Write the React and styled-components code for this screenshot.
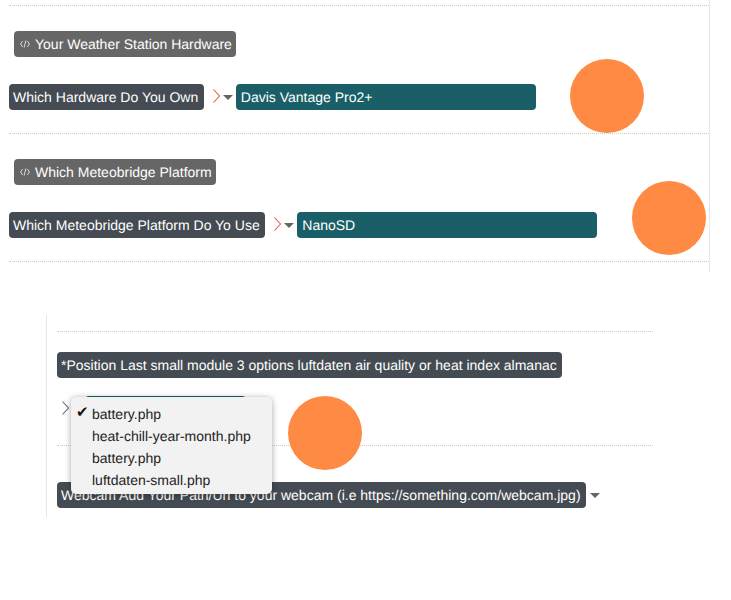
import React from 'react';
import styled, { createGlobalStyle } from 'styled-components';

const GlobalStyle = createGlobalStyle`
  html, body {
    margin: 0;
    padding: 0;
    background: #fff;
    font-family: "Liberation Sans", Arial, sans-serif;
    font-size: 14px;
    text-rendering: geometricPrecision;
  }
`;

const TopPanel = styled.div`
  width: 710px;
  height: 272px;
  padding-top: 5px;
  box-sizing: border-box;
  border-right: 1px solid #e6e6ee;
`;

const BottomPanel = styled.div`
  width: 596px;
  margin: 43px 0 0 46px;
  padding: 16px 0 9px 10px;
  border-left: 1px solid #e6e6ee;
`;

const Rule = styled.div`
  border-top: 1px dotted #ccc;
  margin-left: ${(p) => p.$inset || 0}px;
  margin-top: ${(p) => p.$top || 0}px;
`;

const Section = styled.div`
  padding: 25px 0 23px 9px;
`;

const Heading = styled.div`
  display: inline-flex;
  align-items: center;
  gap: 5px;
  height: 26px;
  margin-left: 5px;
  padding: 0 4px 0 6px;
  border-radius: 4px;
  background: #666;
  color: #fff;
  vertical-align: top;
`;

const Row = styled.div`
  position: relative;
  display: flex;
  align-items: center;
  height: 26px;
  margin-top: ${(p) => p.$top || 0}px;
`;

const Label = styled.div`
  height: 26px;
  line-height: 26px;
  padding: 0 5.6px 0 4px;
  border-radius: 4px;
  background: #444b52;
  color: #fff;
  white-space: nowrap;
`;

const Value = styled.div`
  box-sizing: border-box;
  width: ${(p) => p.$width}px;
  height: 26px;
  line-height: 26px;
  padding: 0 5px;
  border-radius: 4px;
  background: #1a5f68;
  color: #fff;
`;

const Arrow = styled.svg`
  flex: none;
  width: 7px;
  height: 14px;
  margin: -3px 3px 0 ${(p) => p.$left}px;
  fill: none;
  stroke: ${(p) => p.$color};
  stroke-width: 1.1;
`;

const Caret = styled.span`
  flex: none;
  width: 0;
  height: 0;
  margin: 1px 3px 0 ${(p) => p.$left || 0}px;
  border-left: 5px solid transparent;
  border-right: 5px solid transparent;
  border-top: 5px solid #666;
`;

const Circle = styled.div`
  position: absolute;
  z-index: 1;
  left: ${(p) => p.$left}px;
  top: ${(p) => p.$top}px;
  width: 74px;
  height: 74px;
  border-radius: 50%;
  background: #ff8a43;
`;

const Menu = styled.div`
  position: absolute;
  z-index: 2;
  left: 14px;
  top: 1px;
  width: 201px;
  height: 97px;
  box-sizing: border-box;
  padding-top: 6px;
  border-radius: 5px;
  background: #f2f2f2;
  box-shadow: 0 1px 6px rgba(0, 0, 0, 0.35);
  color: #222;
`;

const MenuItem = styled.div`
  display: flex;
  height: 22px;
  line-height: 22px;
`;

const Check = styled.span`
  flex: none;
  width: 21px;
  padding-left: 5px;
  box-sizing: border-box;
  font-family: "DejaVu Sans", sans-serif;
  font-size: 15px;
  line-height: 18px;
  color: #111;
`;

function CodeIcon() {
  return (
    <svg width="10" height="8" viewBox="0 0 10 8" fill="none" stroke="#ddd" strokeWidth="1">
      <polyline points="2.6,1 0.6,4 2.6,7" />
      <polyline points="7.4,1 9.4,4 7.4,7" />
      <line x1="5.8" y1="0.5" x2="4.2" y2="7.5" />
    </svg>
  );
}

function Chevron({ left, color }) {
  return (
    <Arrow $left={left} $color={color} viewBox="0 0 7 14">
      <polyline points="0.5,0.5 6.5,7 0.5,13.5" />
    </Arrow>
  );
}

const menuItems = ['battery.php', 'heat-chill-year-month.php', 'battery.php', 'luftdaten-small.php'];

function SelectRow({ label, value, width, circleLeft, circleTop }) {
  return (
    <Row $top={27}>
      <Label>{label}</Label>
      <Chevron left={9} color="#e8594d" />
      <Caret />
      <Value $width={width}>{value}</Value>
      <Circle $left={circleLeft} $top={circleTop} />
    </Row>
  );
}

export default function App() {
  return (
    <>
      <GlobalStyle />
      <TopPanel>
        <Rule $inset={9} />
        <Section>
          <Heading>
            <CodeIcon />
            Your Weather Station Hardware
          </Heading>
          <SelectRow
            label="Which Hardware Do You Own"
            value="Davis Vantage Pro2+"
            width={300}
            circleLeft={561}
            circleTop={-25}
          />
        </Section>
        <Rule $inset={9} />
        <Section>
          <Heading>
            <CodeIcon />
            Which Meteobridge Platform
          </Heading>
          <SelectRow
            label="Which Meteobridge Platform Do Yo Use"
            value="NanoSD"
            width={300}
            circleLeft={623}
            circleTop={-31}
          />
        </Section>
        <Rule $inset={9} />
      </TopPanel>
      <BottomPanel>
        <Rule />
        <Row $top={20}>
          <Label>*Position Last small module 3 options luftdaten air quality or heat index almanac</Label>
        </Row>
        <Row $top={18}>
          <Chevron left={5} color="#666" />
          <Caret />
          <Value $width={161} />
          <Menu>
            {menuItems.map((item, index) => (
              <MenuItem key={index}>
                <Check>{index === 0 ? '✔' : ''}</Check>
                {item}
              </MenuItem>
            ))}
          </Menu>
          <Circle $left={231} $top={0} />
        </Row>
        <Rule $top={23} />
        <Row $top={36}>
          <Label>Webcam Add Your Path/Url to your webcam (i.e https://something.com/webcam.jpg)</Label>
          <Caret $left={4} />
        </Row>
      </BottomPanel>
    </>
  );
}
